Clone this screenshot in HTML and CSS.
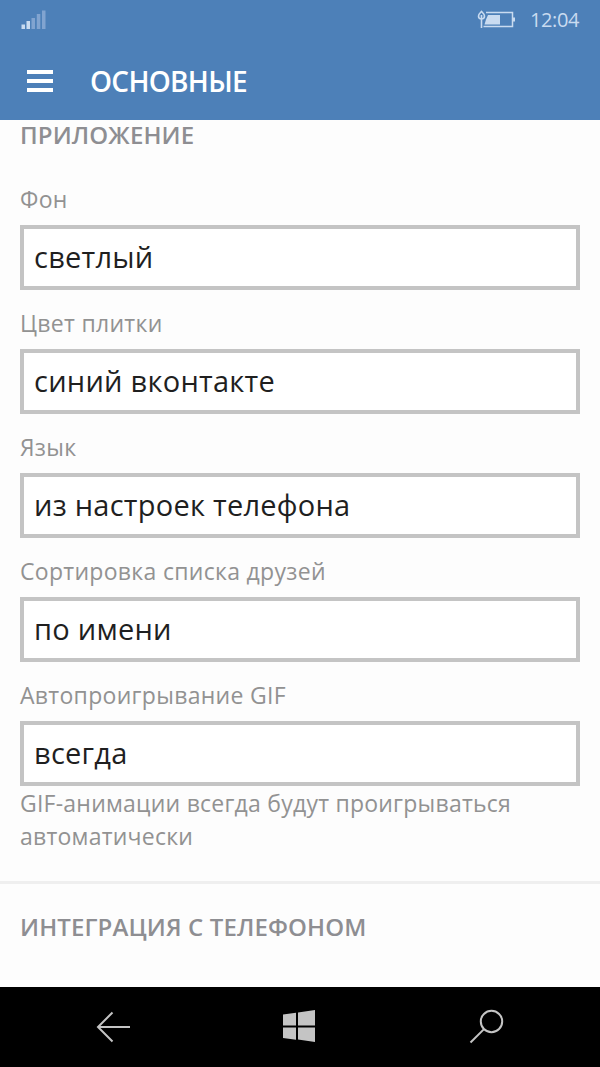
FILE: index.html
```html
<!DOCTYPE html>
<html lang="ru">
<head>
    <title>Основные</title>
    <meta charset="utf-8">
    <meta name="viewport" content="width=device-width, initial-scale=1">
    <link rel="stylesheet" href="styles.css">
</head>
<body>
<header class="header">
    <div class="status-bar">
        <svg class="signal" width="26" height="20" viewBox="0 0 26 20">
            <path d="M.5 14.500h3.500V19H.5zM5.500 11h3.500v8H5.500z" fill="#c9dbf0"/>
            <path d="M10.500 8H14v11h-3.500zM15.800 4h3.500v15h-3.500zM21 .5h3.500V19H21z" fill="#81a4d0"/>
        </svg>
        <div class="status-right">
            <svg class="battery" width="40" height="20" viewBox="0 0 40 20" fill="none" stroke="#c9dbf0">
                <path d="M9 2.500h26.500v14H6.500" stroke-width="1.500"/>
                <path d="M36 7.500h2v4h-2z" fill="#c9dbf0" stroke="none"/>
                <path d="M11 5h12v9.500H7.500L9 9.500z" fill="#c9dbf0" stroke="none"/>
                <path d="M4.500 1.500C6 3 7.500 4 7.500 6s-1.500 3-3 3-3-1-3-3 1.500-3 3-4.500zM4.500 5v13" stroke-width="1.600"/>
            </svg>
            <span class="clock">12:04</span>
        </div>
    </div>
    <div class="title-bar">
        <button class="menu-button" type="button" aria-label="Меню">
            <span></span>
            <span></span>
            <span></span>
        </button>
        <h1 class="title">ОСНОВНЫЕ</h1>
    </div>
</header>
<main class="content">
    <section class="section section-app">
        <h2 class="section-title">ПРИЛОЖЕНИЕ</h2>
        <div class="field">
            <span class="field-title">Фон</span>
            <button class="select" type="button">светлый</button>
        </div>
        <div class="field">
            <span class="field-title">Цвет плитки</span>
            <button class="select" type="button">синий вконтакте</button>
        </div>
        <div class="field">
            <span class="field-title">Язык</span>
            <button class="select" type="button">из настроек телефона</button>
        </div>
        <div class="field">
            <span class="field-title">Сортировка списка друзей</span>
            <button class="select" type="button">по имени</button>
        </div>
        <div class="field">
            <span class="field-title">Автопроигрывание GIF</span>
            <button class="select" type="button">всегда</button>
        </div>
        <p class="hint">GIF-анимации всегда будут проигрываться автоматически</p>
    </section>
    <section class="section section-phone">
        <h2 class="section-title">ИНТЕГРАЦИЯ С ТЕЛЕФОНОМ</h2>
    </section>
</main>
<nav class="nav-bar">
    <svg width="36" height="36" viewBox="0 0 36 36" fill="none" stroke="#c4c4c4" stroke-width="2">
        <path d="M35 18H3M17.500 3.500L3 18l14.500 14.500"/>
    </svg>
    <svg width="36" height="36" viewBox="0 0 36 36" fill="#c4c4c4">
        <path d="M1 5.500l13-1.800v12.800H1zM16 3.400L33 1v15.500H16zM1 18.500h13v12.300L1 29zM16 18.500h17V33l-17-2.400z"/>
    </svg>
    <svg width="36" height="36" viewBox="0 0 36 36" fill="none" stroke="#c4c4c4" stroke-width="2">
        <circle cx="22.500" cy="12.500" r="10.700"/>
        <path d="M15 20.100L1.500 33.500"/>
    </svg>
</nav>
</body>
</html>
```
FILE: styles.css
```css
*, *::before, *::after {
    margin: 0;
    padding: 0;
    box-sizing: border-box;
}

body {
    display: flex;
    flex-direction: column;
    height: 1067px;
    background-color: #fdfdfd;
    color: #1f1f1f;
    font-family: "Open Sans", "Noto Sans", sans-serif;
    font-size: 23px;
}

.header {
    flex: none;
    height: 120px;
    background-color: #4d80b8;
    color: #ffffff;
}

.status-bar {
    display: flex;
    align-items: center;
    justify-content: space-between;
    height: 40px;
    padding: 0 21px;
}

.status-right {
    display: flex;
    align-items: center;
    gap: 13px;
}

.signal, .battery {
    display: block;
}

.clock {
    color: #c9dbf0;
    font-size: 20px;
    letter-spacing: -0.4px;
    line-height: 40px;
}

.title-bar {
    display: flex;
    align-items: center;
    height: 80px;
    padding: 2px 0 0 27px;
}

.menu-button {
    display: flex;
    flex-direction: column;
    gap: 5px;
    width: 26px;
    margin-right: 37px;
    border: none;
    background: none;
}

.menu-button span {
    height: 4px;
    background-color: #ffffff;
}

.title {
    font-size: 28px;
    font-weight: 600;
    letter-spacing: -0.7px;
    line-height: 78px;
}

.content {
    flex: 1;
}

.section {
    padding: 0 20px;
}

.section-app {
    height: 764px;
    border-bottom: 3px solid #efefef;
}

.section-phone {
    padding-top: 27px;
}

.section-title {
    color: #8e8e92;
    font-size: 24px;
    font-weight: 600;
    letter-spacing: 0.13px;
    line-height: 32px;
}

.section-app .section-title {
    margin-bottom: 29px;
    line-height: 30px;
    padding-bottom: 2px;
}

.field {
    display: flex;
    flex-direction: column;
    height: 124px;
}

.field:nth-last-child(2) {
    height: 110px;
}

.field-title {
    height: 44px;
    color: #929292;
    letter-spacing: 0.3px;
    line-height: 36px;
}

.select {
    height: 65px;
    border: 4px solid #c4c4c4;
    padding: 0 10px 2px;
    background-color: #ffffff;
    color: #1f1f1f;
    font-family: inherit;
    font-size: 29px;
    letter-spacing: 0.25px;
    line-height: 55px;
    text-align: left;
}

.hint {
    color: #929292;
    letter-spacing: 0.23px;
    line-height: 33px;
}

.nav-bar {
    display: flex;
    align-items: center;
    justify-content: space-between;
    height: 80px;
    padding: 0 95px;
    background-color: #000000;
}
```
